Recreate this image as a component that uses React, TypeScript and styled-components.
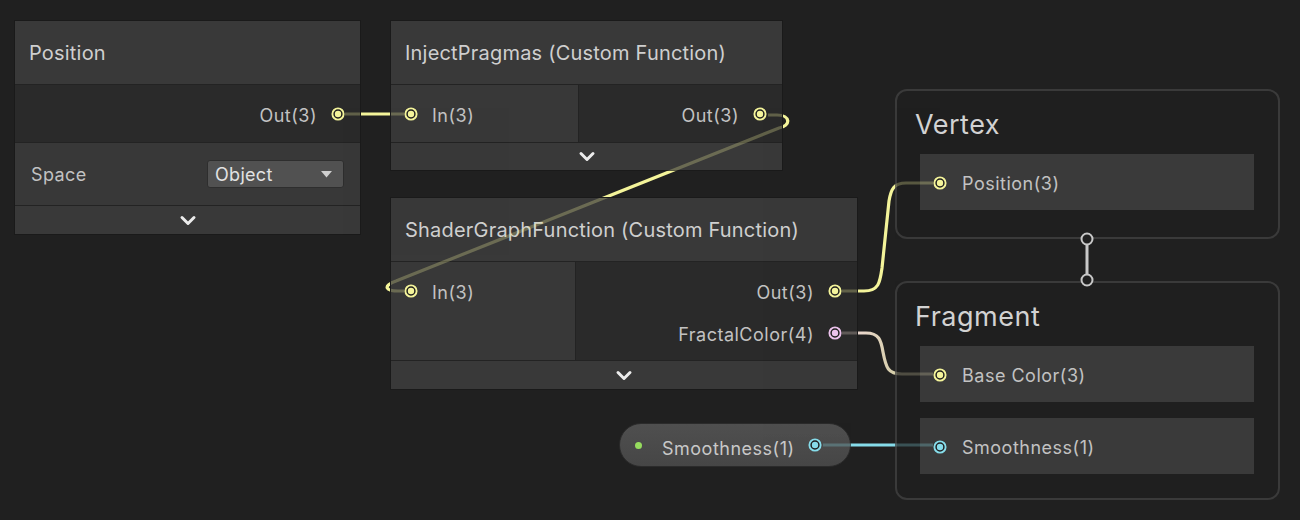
import React from 'react';
import styled, { createGlobalStyle } from 'styled-components';

const GlobalStyle = createGlobalStyle`
  html, body {
    margin: 0;
    padding: 0;
    background: #202020;
  }
  body {
    font-family: Inter, 'Noto Sans', sans-serif;
  }
`;

const YELLOW = '#f4f49a';
const PINK = '#ecc2ec';
const CYAN = '#86dcea';

const Canvas = styled.div`
  position: relative;
  width: 1300px;
  height: 520px;
  overflow: hidden;
  background: #202020;
`;

// edges: bright layer sits under the nodes, dimmed copy goes on top
const WireLayer = styled.svg<{ $top?: boolean }>`
  position: absolute;
  left: 0;
  top: 0;
  width: 1300px;
  height: 520px;
  z-index: ${(p) => (p.$top ? 1 : 0)};
  pointer-events: none;
`;

const Node = styled.div<{ $x: number; $y: number; $w: number }>`
  position: absolute;
  left: ${(p) => p.$x}px;
  top: ${(p) => p.$y}px;
  width: ${(p) => p.$w}px;
  display: flex;
  flex-direction: column;
  gap: 1px;
  background: #232323;
  box-shadow: 0 0 0 1px #1a1a1a;
`;

const Header = styled.div`
  height: 63px;
  display: flex;
  align-items: center;
  padding-left: 14px;
  background: #393939;
  color: #cfcfcf;
  font-size: 20px;
  letter-spacing: 0.2px;
  white-space: nowrap;
`;

const Body = styled.div<{ $h: number }>`
  height: ${(p) => p.$h}px;
  display: flex;
  gap: 1px;
`;

const Column = styled.div<{ $input?: boolean; $w?: number }>`
  box-sizing: border-box;
  padding-top: 8px;
  background: ${(p) => (p.$input ? '#383838' : '#2a2a2a')};
  ${(p) => (p.$w ? `width: ${p.$w}px;` : 'flex: 1;')}
`;

const PortRow = styled.div<{ $out?: boolean }>`
  height: 42px;
  display: flex;
  align-items: center;
  gap: 14px;
  justify-content: ${(p) => (p.$out ? 'flex-end' : 'flex-start')};
  padding: 0 15px 0 13px;
  color: #c2c2c2;
  font-size: 18px;
  letter-spacing: 0.5px;
  white-space: nowrap;
`;

const Label = styled.span`
  padding-top: 3px;
`;

const PortDot = styled.svg`
  position: relative;
  z-index: 2;
  flex: none;
`;

const FieldRow = styled.div`
  height: 62px;
  display: flex;
  align-items: center;
  justify-content: space-between;
  padding: 0 16px;
  background: #383838;
  color: #c2c2c2;
  font-size: 18px;
  letter-spacing: 0.4px;
`;

const Dropdown = styled.div`
  box-sizing: border-box;
  width: 137px;
  height: 28px;
  display: flex;
  align-items: center;
  justify-content: space-between;
  padding: 0 11px 0 7px;
  border-radius: 3px;
  background: #515151;
  border: 1px solid #2e2e2e;
  color: #e2e2e2;
  font-size: 18px;
  letter-spacing: 0.3px;
`;

const Footer = styled.div<{ $h: number }>`
  height: ${(p) => p.$h}px;
  display: flex;
  align-items: center;
  justify-content: center;
  background: #393939;
`;

const Block = styled.div<{ $x: number; $y: number; $h: number }>`
  position: absolute;
  left: ${(p) => p.$x}px;
  top: ${(p) => p.$y}px;
  box-sizing: border-box;
  width: 385px;
  height: ${(p) => p.$h}px;
  padding: 13px 24px 0 23px;
  border: 2px solid #3a3a3a;
  border-radius: 12px;
  background: #1f1f1f;
  display: flex;
  flex-direction: column;
  gap: 16px;
`;

const BlockTitle = styled.div`
  height: 40px;
  margin: 0 0 -6px -5px;
  display: flex;
  align-items: center;
  color: #d2d2d2;
  font-size: 27px;
  letter-spacing: 0.5px;
`;

const Slot = styled.div`
  height: 56px;
  display: flex;
  align-items: center;
  gap: 15px;
  padding: 2px 0 0 13px;
  box-sizing: border-box;
  background: #3a3a3a;
  color: #c2c2c2;
  font-size: 18px;
  letter-spacing: 0.5px;
`;

const Property = styled.div`
  position: absolute;
  left: 619px;
  top: 423px;
  box-sizing: border-box;
  width: 232px;
  height: 44px;
  border-radius: 22px;
  border: 1px solid #2b2b2b;
  background: linear-gradient(#4f4f4f, #464646);
  display: flex;
  align-items: center;
  padding: 0 28px 0 15px;
  color: #c8c8c8;
  font-size: 18px;
  letter-spacing: 0.5px;
`;

const Pip = styled.span`
  width: 7px;
  height: 7px;
  border-radius: 50%;
  background: #96dc5e;
  margin-right: 20px;
  flex: none;
`;

const PropLabel = styled.span`
  flex: 1;
  padding-top: 7px;
`;

function Port({ color }: { color: string }) {
  return (
    <PortDot width="14" height="14" viewBox="0 0 14 14">
      <circle cx="7" cy="7" r="5.6" fill="#1e1e1e" stroke={color} strokeWidth="1.9" />
      <circle cx="7" cy="7" r="3.2" fill={color} />
    </PortDot>
  );
}

function Chevron() {
  return (
    <svg width="18" height="11" viewBox="0 0 18 11">
      <polyline
        points="3,2.5 9,8.5 15,2.5"
        fill="none"
        stroke="#ececec"
        strokeWidth="3"
        strokeLinecap="round"
        strokeLinejoin="round"
      />
    </svg>
  );
}

function Caret() {
  return (
    <svg width="11" height="7" viewBox="0 0 11 7">
      <polygon points="0,0 11,0 5.5,6.5" fill="#cfcfcf" />
    </svg>
  );
}

const wires = [
  { d: 'M345,114 L404,114', color: YELLOW },
  {
    d: 'M768,115 L777,115 C791,115 791,126 779,128 L396,281 C382,286 386,291 398,291 L404,291',
    color: YELLOW,
  },
  {
    d: 'M842,291 L864,291 C879,291 880,282 882,268 L889,201 C891,189 894,183 906,183 L933,183',
    color: YELLOW,
  },
  {
    d: 'M842,333 L866,333 C879,333 881,340 883,352 C886,368 888,374 902,374 L933,374',
    color: 'url(#pinkToYellow)',
  },
  { d: 'M823,445 L933,445', color: CYAN },
];

// edge segments lying over these areas get drawn dimmed
const covered = [
  [15, 21, 345, 214],
  [391, 21, 391, 150],
  [391, 198, 466, 192],
  [895, 89, 385, 150],
  [895, 281, 385, 219],
  [619, 423, 232, 44],
];

export default function App() {
  return (
    <Canvas>
      <GlobalStyle />
      <WireLayer viewBox="0 0 1300 520">
        <defs>
          <linearGradient id="pinkToYellow" gradientUnits="userSpaceOnUse" x1="856" y1="0" x2="900" y2="0">
            <stop offset="0" stopColor="#ecd8d0" />
            <stop offset="1" stopColor="#d2cca4" />
          </linearGradient>
        </defs>
        {wires.map((w, i) => (
          <path key={i} d={w.d} fill="none" stroke={w.color} strokeWidth="3.2" />
        ))}
      </WireLayer>

      <Node $x={15} $y={21} $w={345}>
        <Header>Position</Header>
        <Body $h={57}>
          <Column>
            <PortRow $out>
              <Label>Out(3)</Label>
              <Port color={YELLOW} />
            </PortRow>
          </Column>
        </Body>
        <FieldRow>
          Space
          <Dropdown>
            Object
            <Caret />
          </Dropdown>
        </FieldRow>
        <Footer $h={28}>
          <Chevron />
        </Footer>
      </Node>

      <Node $x={391} $y={21} $w={391}>
        <Header>InjectPragmas (Custom Function)</Header>
        <Body $h={57}>
          <Column $input $w={187}>
            <PortRow>
              <Port color={YELLOW} />
              <Label>In(3)</Label>
            </PortRow>
          </Column>
          <Column>
            <PortRow $out>
              <Label>Out(3)</Label>
              <Port color={YELLOW} />
            </PortRow>
          </Column>
        </Body>
        <Footer $h={27}>
          <Chevron />
        </Footer>
      </Node>

      <Node $x={391} $y={198} $w={466}>
        <Header>ShaderGraphFunction (Custom Function)</Header>
        <Body $h={98}>
          <Column $input $w={184}>
            <PortRow>
              <Port color={YELLOW} />
              <Label>In(3)</Label>
            </PortRow>
          </Column>
          <Column>
            <PortRow $out>
              <Label>Out(3)</Label>
              <Port color={YELLOW} />
            </PortRow>
            <PortRow $out>
              <Label>FractalColor(4)</Label>
              <Port color={PINK} />
            </PortRow>
          </Column>
        </Body>
        <Footer $h={28}>
          <Chevron />
        </Footer>
      </Node>

      <Block $x={895} $y={89} $h={150}>
        <BlockTitle>Vertex</BlockTitle>
        <Slot>
          <Port color={YELLOW} />
          Position(3)
        </Slot>
      </Block>

      <Block $x={895} $y={281} $h={219}>
        <BlockTitle>Fragment</BlockTitle>
        <Slot>
          <Port color={YELLOW} />
          Base Color(3)
        </Slot>
        <Slot>
          <Port color={CYAN} />
          Smoothness(1)
        </Slot>
      </Block>

      <Property>
        <Pip />
        <PropLabel>Smoothness(1)</PropLabel>
        <Port color={CYAN} />
      </Property>

      <WireLayer viewBox="0 0 1300 520" $top>
        <defs>
          <clipPath id="covered">
            {covered.map(([x, y, w, h], i) => (
              <rect key={i} x={x} y={y} width={w} height={h} />
            ))}
          </clipPath>
        </defs>
        <g clipPath="url(#covered)" opacity="0.27">
          {wires.map((w, i) => (
            <path key={i} d={w.d} fill="none" stroke={w.color} strokeWidth="3.2" />
          ))}
        </g>
        <line x1="1087" y1="245" x2="1087" y2="274" stroke="#c8c8c8" strokeWidth="3" />
        <circle cx="1087" cy="239" r="5.5" fill="#202020" stroke="#c8c8c8" strokeWidth="2" />
        <circle cx="1087" cy="280" r="5.5" fill="#202020" stroke="#c8c8c8" strokeWidth="2" />
      </WireLayer>
    </Canvas>
  );
}
